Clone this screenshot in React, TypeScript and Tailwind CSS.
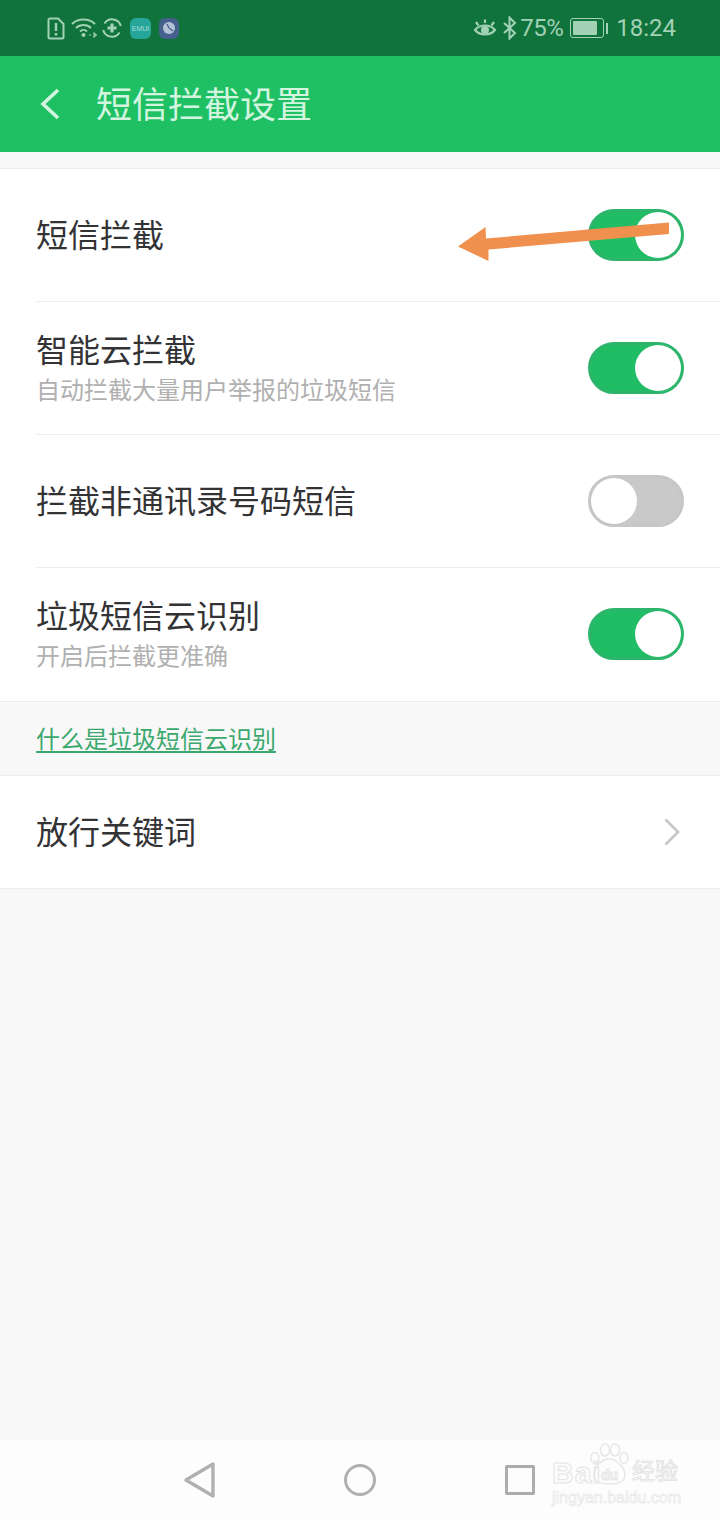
const cjk = "font-['Noto_Sans_CJK_SC','Noto_Sans',sans-serif]";

const Toggle = ({ on }: { on: boolean }) => (
  <div
    className={`w-[96px] h-[52px] rounded-full flex items-center border-[3px] shrink-0 ${
      on ? "bg-[#20bd64] border-[#2db56c] justify-end" : "bg-[#c9c9c9] border-[#c6c6c6] justify-start"
    }`}
  >
    <div className="w-[46px] h-[46px] rounded-full bg-white" />
  </div>
);

const Row = ({
  title,
  sub,
  on,
  last,
}: {
  title: string;
  sub?: string;
  on: boolean;
  last?: boolean;
}) => (
  <div className="pl-[36px]">
    <div
      className={`h-[133px] flex items-center justify-between pr-[36px] ${
        last ? "pb-[1px]" : "border-b border-[#ececec]"
      }`}
    >
      <div className={`flex flex-col ${sub ? "pb-[2px]" : "pb-[4px]"}`}>
        <span className="text-[32px] leading-[40px] text-[#333336]">{title}</span>
        {sub && <span className="text-[24px] leading-[34px] mt-[4px] text-[#b0b0b0]">{sub}</span>}
      </div>
      <Toggle on={on} />
    </div>
  </div>
);

export default function App() {
  return (
    <div className={`relative w-[720px] h-[1520px] bg-[#f8f8f8] flex flex-col overflow-hidden ${cjk}`}>
      {/* Status bar */}
      <div className="h-[56px] bg-[#10733c] flex items-center justify-between pl-[47px] pr-[44px] text-[#a2d1b5]">
        <div className="flex items-center">
          <svg width="18" height="23" viewBox="0 0 18 23" fill="none" stroke="currentColor" strokeWidth="2">
            <path d="M3 1.500h8l5.500 5.500v13a1.500 1.500 0 0 1-1.500 1.500H3A1.500 1.500 0 0 1 1.500 20V3A1.500 1.500 0 0 1 3 1.500z" />
            <path d="M9 6v8M9 16v2.500" strokeWidth="2.400" />
          </svg>
          <svg className="ml-[6px]" width="26" height="22" viewBox="0 0 26 22" fill="none" stroke="currentColor" strokeWidth="2">
            <path d="M1 7c6-6 17-6 23 0M5 11c4-4 11-4 15 0M9 14.500c2-2 5-2 7 0" />
            <circle cx="12.500" cy="18" r="2" fill="currentColor" stroke="none" />
            <path d="M18 18h2M23 16l2.500 2-2.500 2z" strokeWidth="1.200" />
          </svg>
          <svg className="ml-[4px]" width="22" height="22" viewBox="0 0 22 22" fill="none" stroke="currentColor">
            <path d="M3.500 6.500A9 9 0 0 1 19.800 9M18.500 15.500A9 9 0 0 1 2.200 13" strokeWidth="2" />
            <path d="M11 6.500v9M6.500 11h9" strokeWidth="3.200" />
          </svg>
          <div className="ml-[7px] w-[21px] h-[21px] rounded-[6px] bg-[#26a69a] flex items-center justify-center text-[7px] leading-none text-[#a8dcd6] font-['Liberation_Sans',sans-serif]">
            EMUI
          </div>
          <div className="ml-[8px] w-[20px] h-[21px] rounded-[6px] bg-[#45608f] flex items-center justify-center">
            <svg width="14" height="14" viewBox="0 0 14 14">
              <circle cx="7" cy="7" r="6" fill="#b4c2d6" />
              <path d="M7 7l4 3M7 7l-2-4" stroke="#45608f" strokeWidth="1.300" fill="none" />
            </svg>
          </div>
        </div>
        <div className="flex items-center font-['Roboto',sans-serif] text-[24px] leading-none">
          <svg width="24" height="20" viewBox="0 0 24 20" fill="none" stroke="currentColor" strokeWidth="2.200">
            <path d="M2 12c5-6 15-6 20 0-5 6-15 6-20 0z" />
            <circle cx="12" cy="12" r="4" fill="currentColor" stroke="none" />
            <path d="M3 4l2.500 3.500M12 1.500v3.500M21 4l-2.500 3.500" />
          </svg>
          <svg className="ml-[6px]" width="14" height="24" viewBox="0 0 14 24" fill="none" stroke="currentColor" strokeWidth="2">
            <path d="M1 7l11 10-5.500 5.500v-21L12 7 1 17" />
          </svg>
          <span className="ml-[3px] tracking-[-0.5px]">75%</span>
          <div className="ml-[7px] w-[34px] h-[20px] rounded-[3px] border border-[#a2d1b5] p-[2px] flex">
            <div className="w-[24px] bg-[#a2d1b5] rounded-[1px]" />
          </div>
          <div className="ml-[2px] w-[2px] h-[11px] bg-[#a2d1b5]" />
          <span className="ml-[8px]">18:24</span>
        </div>
      </div>

      {/* Header */}
      <div className="h-[96px] bg-[#1fc063] flex items-center pl-[40px] text-[#d3f5e0]">
        <svg width="20" height="32" viewBox="0 0 20 32" fill="none" stroke="currentColor" strokeWidth="3.600">
          <path d="M18 2L3 16l15 14" />
        </svg>
        <span className="ml-[36px] pb-[4px] text-[36px] leading-none">短信拦截设置</span>
      </div>

      {/* Settings */}
      <div className="mt-[16px] bg-white border-y border-[#ececec]">
        <Row title="短信拦截" on />
        <Row title="智能云拦截" sub="自动拦截大量用户举报的垃圾短信" on />
        <Row title="拦截非通讯录号码短信" on={false} />
        <Row title="垃圾短信云识别" sub="开启后拦截更准确" on last />
      </div>

      <div className="h-[73px] flex items-center pl-[36px] pb-[2px]">
        <span className="text-[24px] leading-none text-[#3ba86e] underline underline-offset-[3px]">什么是垃圾短信云识别</span>
      </div>

      <div className="bg-white border-y border-[#ececec] pl-[36px]">
        <div className="h-[112px] flex items-center justify-between pr-[40px]">
          <span className="text-[32px] pb-[4px] text-[#333336]">放行关键词</span>
          <svg width="16" height="28" viewBox="0 0 16 28" fill="none" stroke="#c8c8c8" strokeWidth="2.800">
            <path d="M1.500 1.500L14 14 1.500 26.500" />
          </svg>
        </div>
      </div>

      {/* Nav bar */}
      <div className="mt-auto h-[80px] bg-[#fdfdfd] flex items-center relative">
        <svg className="ml-[184px]" width="32" height="36" viewBox="0 0 32 36" fill="none" stroke="#b0b0b0" strokeWidth="3.400" strokeLinejoin="round">
          <path d="M29 2v32L2 18z" />
        </svg>
        <svg className="ml-[128px]" width="32" height="32" viewBox="0 0 32 32" fill="none" stroke="#b0b0b0" strokeWidth="3">
          <circle cx="16" cy="16" r="14.500" />
        </svg>
        <div className="ml-[129px] w-[30px] h-[30px] rounded-[2px] border-[3.400px] border-[#adadad]" />

        {/* Watermark */}
        <div className="absolute left-[552px] top-[3px] w-[130px] h-[70px] text-transparent [-webkit-text-stroke:1px_#e4e4e4]">
          <svg className="absolute left-[36px] top-0" width="42" height="44" viewBox="0 0 42 44" fill="none" stroke="#e6e6e6" strokeWidth="1.400">
            <ellipse cx="17" cy="7" rx="4.500" ry="6" />
            <ellipse cx="27" cy="7" rx="4.500" ry="6" />
            <ellipse cx="7" cy="15" rx="4" ry="5.500" />
            <ellipse cx="36" cy="15" rx="4" ry="5.500" />
            <path d="M21 16c7 0 16 8 16 16 0 7-7 9-16 9s-15-3-15-9c0-8 8-16 15-16z" />
          </svg>
          <span className="absolute left-0 top-[15px] text-[30px] leading-none font-bold font-['Liberation_Sans',sans-serif] tracking-[1px]">Bai</span>
          <span className="absolute left-[49px] top-[25px] text-[14px] leading-none font-bold font-['Liberation_Sans',sans-serif]">du</span>
          <span className="absolute left-[80px] top-[15px] text-[23px] leading-none whitespace-nowrap">经验</span>
          <span className="absolute left-0 top-[47px] text-[16px] leading-none whitespace-nowrap font-['Liberation_Sans',sans-serif] [-webkit-text-stroke:0.6px_#e4e4e4]">jingyan.baidu.com</span>
        </div>
      </div>

      {/* Annotation arrow */}
      <svg className="absolute left-0 top-0 pointer-events-none" width="720" height="300" viewBox="0 0 720 300">
        <path d="M669 222.500L669 234L488.500 249.500L488.500 261L458 246.500L485.500 227L486 238.500Z" fill="#f0904e" />
      </svg>
    </div>
  );
}
